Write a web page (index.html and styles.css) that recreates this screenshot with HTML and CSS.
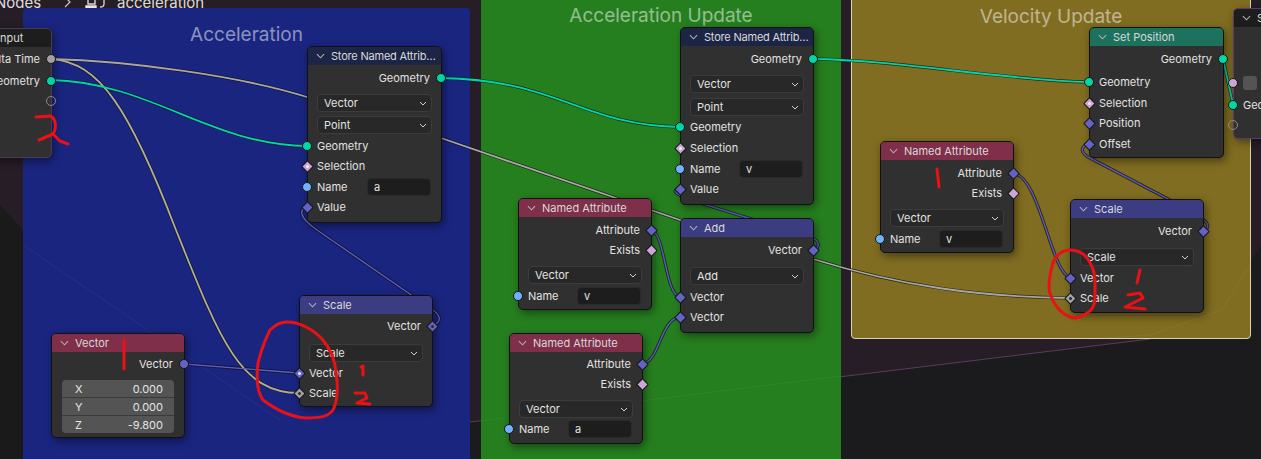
FILE: index.html
```html
<!DOCTYPE html>
<html lang="en">
<head>
<meta charset="utf-8">
<title>Geometry Nodes - acceleration</title>
<link rel="stylesheet" href="styles.css">
</head>
<body>
<main class="canvas">
  <svg class="layer" width="1261" height="459" viewBox="0 0 1261 459">
    <polygon class="bg-region" points="0,0 1261,0 1261,245 1222,310 1180,335 1150,339 470,422 0,478"/>
    <polygon class="bg-dark" points="0,205 23,230 23,459 0,459"/>
    <path class="bg-line" d="M470 422 L1150 339"/>
  </svg>

  <nav class="crumbs">
    <span class="crumb-nodes">Nodes</span>
    <svg class="crumb-sep" width="8" height="12" viewBox="0 0 8 12"><path d="M1 1 L6 6 L1 11"/></svg>
    <svg class="crumb-icon" width="21" height="13" viewBox="0 0 21 13"><path class="ic-a" d="M1 8 H11 V12 H1 Z"/><path class="ic-c" d="M3 1 H10 V6 H3 Z"/><path class="ic-b" d="M15 0 H19 V6 Q19 9 15 9"/></svg>
    <span class="crumb-name">acceleration</span>
  </nav>

  <section class="frame frame-blue"><h2 class="frame-title">Acceleration</h2></section>
  <section class="frame frame-green"><h2 class="frame-title title-high">Acceleration Update</h2></section>
  <section class="frame frame-yellow"><h2 class="frame-title title-high">Velocity Update</h2></section>

  <svg class="layer" width="1261" height="459" viewBox="0 0 1261 459">
    <path class="bg-faint" d="M23 245 L280 420 M481 421 L841 376 M1090 339 L1150 335 L1222 310 L1250 265"/>
    <g class="casing">
      <path d="M51 59 C130 61 240 76 307 97 L441 138 L680 220 L813 259 C900 286 980 297 1070 298"/>
      <path d="M51 59 C100 62 130 110 176 230 C220 340 240 393 299 393"/>
      <path d="M51 80 C150 82 210 145 307 146"/>
      <path d="M441 78 C560 80 580 125 680 127"/>
      <path d="M813 59 C900 60 1000 80 1089 82"/>
      <path d="M1223 59 L1233 104"/>
      <path d="M184 364 L299 373"/>
      <path d="M432 326 C442 322 441 316 433 310 L317 230 C300 218 298 210 307 207"/>
      <path d="M813 250 C822 247 818 240 812 238 L745 217 L700 203 C675 195 670 190 680 189"/>
      <path d="M651 230 C665 232 665 295 680 297"/>
      <path d="M642 364 C660 362 660 319 680 317"/>
      <path d="M1089 144 C1078 147 1082 154 1090 158 L1168 199 L1198 216 C1210 223 1210 228 1203 231"/>
      <path d="M1013 173 C1040 176 1050 270 1070 278"/>
    </g>
    <g class="wire">
      <path class="w-grey" d="M51 59 C130 61 240 76 307 97 L441 138 L680 220 L813 259 C900 286 980 297 1070 298"/>
      <path class="w-tan" d="M51 59 C100 62 130 110 176 230 C220 340 240 393 299 393"/>
      <path class="w-green" d="M51 80 C150 82 210 145 307 146"/>
      <path class="w-green" d="M441 78 C560 80 580 125 680 127"/>
      <path class="w-green" d="M813 59 C900 60 1000 80 1089 82"/>
      <path class="w-green" d="M1223 59 L1233 104"/>
      <path class="w-violet" d="M184 364 L299 373"/>
      <path class="w-violet" d="M432 326 C442 322 441 316 433 310 L317 230 C300 218 298 210 307 207"/>
      <path class="w-violet" d="M813 250 C822 247 818 240 812 238 L745 217 L700 203 C675 195 670 190 680 189"/>
      <path class="w-violet" d="M651 230 C665 232 665 295 680 297"/>
      <path class="w-violet" d="M642 364 C660 362 660 319 680 317"/>
      <path class="w-violet" d="M1089 144 C1078 147 1082 154 1090 158 L1168 199 L1198 216 C1210 223 1210 228 1203 231"/>
      <path class="w-violet" d="M1013 173 C1040 176 1050 270 1070 278"/>
    </g>
  </svg>

  <article class="node n-input">
    <header class="head head-black"><svg class="chev" viewBox="0 0 10 6"><path d="M1 1 L5 5 L9 1"/></svg><span class="head-text">Group Input</span></header>
    <div class="rows tight">
      <div class="row out">Delta Time<i class="sock circle grey"></i></div>
      <div class="row out gap2">Geometry<i class="sock circle teal"></i></div>
      <div class="row out"><i class="sock circle hollow"></i></div>
    </div>
  </article>

  <article class="node n-store1">
    <header class="head head-navy"><svg class="chev" viewBox="0 0 10 6"><path d="M1 1 L5 5 L9 1"/></svg><span class="head-text">Store Named Attrib…</span></header>
    <div class="rows">
      <div class="row out">Geometry<i class="sock circle teal"></i></div>
      <div class="select gap6">Vector<svg class="caret" viewBox="0 0 8 5"><path d="M1 1 L4 4 L7 1"/></svg></div>
      <div class="select gap4">Point<svg class="caret" viewBox="0 0 8 5"><path d="M1 1 L4 4 L7 1"/></svg></div>
      <div class="row gap2"><i class="sock circle teal"></i>Geometry</div>
      <div class="row"><i class="sock diamond pink dot"></i>Selection</div>
      <div class="row gap1"><i class="sock circle blue"></i>Name<span class="field">a</span></div>
      <div class="row"><i class="sock diamond violet"></i>Value</div>
    </div>
  </article>

  <article class="node n-scale1">
    <header class="head head-indigo"><svg class="chev" viewBox="0 0 10 6"><path d="M1 1 L5 5 L9 1"/></svg><span class="head-text">Scale</span></header>
    <div class="rows tight">
      <div class="row out">Vector<i class="sock diamond violet dot-dark"></i></div>
      <div class="select gap8">Scale<svg class="caret" viewBox="0 0 8 5"><path d="M1 1 L4 4 L7 1"/></svg></div>
      <div class="row gap1"><i class="sock diamond violet dot"></i>Vector</div>
      <div class="row"><i class="sock diamond grey dot-dark"></i>Scale</div>
    </div>
  </article>

  <article class="node n-vector">
    <header class="head head-red"><svg class="chev" viewBox="0 0 10 6"><path d="M1 1 L5 5 L9 1"/></svg><span class="head-text">Vector</span></header>
    <div class="rows tight">
      <div class="row out">Vector<i class="sock circle violet"></i></div>
      <div class="numbers">
        <div class="num"><span>X</span><span>0.000</span></div>
        <div class="num"><span>Y</span><span>0.000</span></div>
        <div class="num"><span>Z</span><span>-9.800</span></div>
      </div>
    </div>
  </article>

  <article class="node n-store2">
    <header class="head head-navy"><svg class="chev" viewBox="0 0 10 6"><path d="M1 1 L5 5 L9 1"/></svg><span class="head-text">Store Named Attrib…</span></header>
    <div class="rows">
      <div class="row out">Geometry<i class="sock circle teal"></i></div>
      <div class="select gap6">Vector<svg class="caret" viewBox="0 0 8 5"><path d="M1 1 L4 4 L7 1"/></svg></div>
      <div class="select gap5">Point<svg class="caret" viewBox="0 0 8 5"><path d="M1 1 L4 4 L7 1"/></svg></div>
      <div class="row gap1"><i class="sock circle teal"></i>Geometry</div>
      <div class="row gap1"><i class="sock diamond pink dot"></i>Selection</div>
      <div class="row gap1"><i class="sock circle blue"></i>Name<span class="field">v</span></div>
      <div class="row"><i class="sock diamond violet"></i>Value</div>
    </div>
  </article>

  <article class="node n-attr1">
    <header class="head head-red"><svg class="chev" viewBox="0 0 10 6"><path d="M1 1 L5 5 L9 1"/></svg><span class="head-text">Named Attribute</span></header>
    <div class="rows">
      <div class="row out">Attribute<i class="sock diamond violet"></i></div>
      <div class="row out">Exists<i class="sock diamond pink"></i></div>
      <div class="select gap6">Vector<svg class="caret" viewBox="0 0 8 5"><path d="M1 1 L4 4 L7 1"/></svg></div>
      <div class="row gap2"><i class="sock circle blue"></i>Name<span class="field">v</span></div>
    </div>
  </article>

  <article class="node n-add">
    <header class="head head-indigo"><svg class="chev" viewBox="0 0 10 6"><path d="M1 1 L5 5 L9 1"/></svg><span class="head-text">Add</span></header>
    <div class="rows">
      <div class="row out">Vector<i class="sock diamond violet"></i></div>
      <div class="select gap7">Add<svg class="caret" viewBox="0 0 8 5"><path d="M1 1 L4 4 L7 1"/></svg></div>
      <div class="row gap2"><i class="sock diamond violet"></i>Vector</div>
      <div class="row"><i class="sock diamond violet"></i>Vector</div>
    </div>
  </article>

  <article class="node n-attr2">
    <header class="head head-red"><svg class="chev" viewBox="0 0 10 6"><path d="M1 1 L5 5 L9 1"/></svg><span class="head-text">Named Attribute</span></header>
    <div class="rows tight">
      <div class="row out">Attribute<i class="sock diamond violet"></i></div>
      <div class="row out">Exists<i class="sock diamond pink"></i></div>
      <div class="select gap6">Vector<svg class="caret" viewBox="0 0 8 5"><path d="M1 1 L4 4 L7 1"/></svg></div>
      <div class="row gap1"><i class="sock circle blue"></i>Name<span class="field">a</span></div>
    </div>
  </article>

  <article class="node n-setpos">
    <header class="head head-teal"><svg class="chev" viewBox="0 0 10 6"><path d="M1 1 L5 5 L9 1"/></svg><span class="head-text">Set Position</span></header>
    <div class="rows">
      <div class="row out">Geometry<i class="sock circle teal"></i></div>
      <div class="row gap3"><i class="sock circle teal"></i>Geometry</div>
      <div class="row gap1"><i class="sock diamond pink dot"></i>Selection</div>
      <div class="row"><i class="sock diamond violet"></i>Position</div>
      <div class="row gap1"><i class="sock diamond violet"></i>Offset</div>
    </div>
  </article>

  <article class="node n-attr3">
    <header class="head head-red"><svg class="chev" viewBox="0 0 10 6"><path d="M1 1 L5 5 L9 1"/></svg><span class="head-text">Named Attribute</span></header>
    <div class="rows">
      <div class="row out">Attribute<i class="sock diamond violet"></i></div>
      <div class="row out">Exists<i class="sock diamond pink"></i></div>
      <div class="select gap6">Vector<svg class="caret" viewBox="0 0 8 5"><path d="M1 1 L4 4 L7 1"/></svg></div>
      <div class="row gap2"><i class="sock circle blue"></i>Name<span class="field">v</span></div>
    </div>
  </article>

  <article class="node n-scale3">
    <header class="head head-indigo"><svg class="chev" viewBox="0 0 10 6"><path d="M1 1 L5 5 L9 1"/></svg><span class="head-text">Scale</span></header>
    <div class="rows">
      <div class="row out">Vector<i class="sock diamond violet"></i></div>
      <div class="select gap7">Scale<svg class="caret" viewBox="0 0 8 5"><path d="M1 1 L4 4 L7 1"/></svg></div>
      <div class="row gap2"><i class="sock diamond violet"></i>Vector</div>
      <div class="row"><i class="sock diamond grey dot-dark"></i>Scale</div>
    </div>
  </article>

  <article class="node n-output">
    <header class="head head-black"><svg class="chev" viewBox="0 0 10 6"><path d="M1 1 L5 5 L9 1"/></svg><span class="head-text">Set Material</span></header>
    <div class="rows">
      <div class="row gap-out"><i class="sock circle pink"></i><span class="check"></span>Selection</div>
      <div class="row gap2"><i class="sock circle teal"></i>Geometry</div>
      <div class="row"><i class="sock circle hollow"></i></div>
    </div>
  </article>

  <svg class="layer ink" width="1261" height="459" viewBox="0 0 1261 459">
    <path d="M36 117 L50 116 C56 118 57 128 53 134 L39 140 M53 134 L60 141 L68 144"/>
    <path d="M124 340 L124 369"/>
    <path d="M270 330 C275 325 280 322 287 322 C300 322 314 330 323 340 C331 350 335 360 336 372 C338 385 338 400 333 410 C328 417 320 418 306 418 C290 417 275 409 263 400 C257 392 256 380 258 363 C261 350 265 340 270 330"/>
    <path d="M361 367 L363 366 L363 375"/>
    <path d="M355 393 L365 393 L367 398 L357 403 L370 404"/>
    <path d="M937 169 L939 187"/>
    <path d="M1053 263 C1055 256 1062 250 1070 250 C1078 250 1084 254 1087 258 C1092 265 1095 272 1095 280 L1095 300 C1094 307 1091 311 1087 313 C1082 317 1078 318 1073 318 C1066 316 1061 312 1057 307 C1052 300 1049 294 1049 287 C1049 278 1051 270 1053 263"/>
    <path d="M1140 270 L1137 283"/>
    <path d="M1128 295 L1140 293 L1143 298 L1125 307 L1145 309"/>
  </svg>
</main>
</body>
</html>
```
FILE: styles.css
```css
* { box-sizing: border-box; }
html, body { margin: 0; padding: 0; background: #1b1b1d; }
body { width: 1261px; height: 459px; overflow: hidden; font-family: Inter, "Noto Sans", sans-serif; }
.canvas { position: relative; width: 1261px; height: 459px; overflow: hidden; background: #1b1b1d; }
.layer { position: absolute; left: 0; top: 0; pointer-events: none; }
.bg-region { fill: #261d27; }
.bg-dark { fill: #1a1a1a; }
.bg-line { stroke: #5a3c5e; stroke-width: 1; fill: none; }
.bg-faint { stroke: rgba(255, 255, 255, .05); stroke-width: 1; fill: none; }

.crumbs { position: absolute; left: 0; top: -7px; height: 18px; display: flex; align-items: center; color: #dcdcdc; font-size: 15px; white-space: nowrap; }
.crumb-nodes { margin-left: -5px; width: 69px; }
.crumb-sep { fill: none; stroke: #c8c8c8; stroke-width: 1.2; }
.crumb-icon { margin-left: 13px; margin-top: 5px; fill: none; stroke-width: 1.4; }
.crumb-icon .ic-a { fill: #e6e6e6; stroke: #e6e6e6; }
.crumb-icon .ic-b { stroke: #d0d0d0; }
.crumb-icon .ic-c { stroke: #d8d8d8; }
.crumb-name { margin-left: 11px; }

.frame { position: absolute; border-radius: 4px; }
.frame-blue { left: 23px; top: 8px; width: 447px; height: 470px; background: #1a2580; }
.frame-green { left: 481px; top: -22px; width: 360px; height: 500px; background: #267f1f; }
.frame-yellow { left: 851px; top: -22px; width: 400px; height: 361px; background: #806d21; border: 1px solid #d9d4b8; }
.frame-title { margin: 0; padding-top: 16px; text-align: center; font-size: 19px; font-weight: 400; line-height: 22px; color: rgba(255, 255, 255, .5); }
.title-high { padding-top: 27px; }

.wire, .casing { fill: none; stroke-linecap: round; }
.casing path { stroke: rgba(15, 15, 25, .75); stroke-width: 3.2; }
.wire path { stroke-width: 1.8; }
.wire .w-violet { stroke-width: 1.4; }
.w-grey { stroke: #aaa7a2; }
.w-tan { stroke: #b0ad90; }
.w-green { stroke: #00d6a3; }
.w-violet { stroke: #5e5ebc; }

.node { position: absolute; background: #303030; border: 1px solid #111; border-radius: 5px; box-shadow: 2px 3px 8px rgba(0, 0, 0, .45); color: #e2e2e2; font-size: 11px; }
.head { height: 18px; display: flex; align-items: center; border-radius: 4px 4px 0 0; padding-left: 8px; color: #d8d8d8; white-space: nowrap; overflow: hidden; }
.head-text { margin-left: 6px; }
.chev { width: 9px; height: 6px; fill: none; stroke: #aeb0b8; stroke-width: 1.2; flex: none; }
.head-navy { background: #1d2546; }
.head-navy .head-text { letter-spacing: -.2px; }
.head-indigo { background: #3c3c83; }
.head-red { background: #7f2f4a; }
.head-teal { background: #1d725e; }
.head-black { background: #1d1d1d; }

.rows { padding: 3px 0 0; }
.rows.tight { padding-top: 2px; }
.row { position: relative; height: 20px; line-height: 20px; padding: 0 11px 0 9px; display: flex; align-items: center; justify-content: flex-start; white-space: nowrap; }
.row.out { justify-content: flex-end; }
.gap1 { margin-top: 1px; }
.gap2 { margin-top: 2px; }
.gap3 { margin-top: 3px; }
.gap4 { margin-top: 4px; }
.gap5 { margin-top: 5px; }
.gap6 { margin-top: 6px; }
.gap7 { margin-top: 7px; }
.gap8 { margin-top: 8px; }
.gap-out { margin-top: 43px; }

.select { position: relative; height: 18px; margin-left: 9px; margin-right: 9px; padding-left: 6px; background: #282828; border: 1px solid #3c3c3c; border-radius: 4px; line-height: 16px; }
.caret { position: absolute; right: 4px; top: 6px; width: 8px; height: 5px; fill: none; stroke: #d0d0d0; stroke-width: 1; }
.field { margin-left: auto; margin-right: -1px; width: 64px; height: 18px; padding-left: 6px; background: #1d1d1d; border: 1px solid #2a2a2a; border-radius: 4px; line-height: 16px; }

.numbers { margin: 6px 10px 0; border-radius: 4px; overflow: hidden; background: #3a3a3a; }
.num { height: 17px; padding: 0 11px 0 13px; display: flex; justify-content: space-between; align-items: center; background: #545454; margin-bottom: 1px; color: #e4e4e4; }
.num:last-child { margin-bottom: 0; }

.sock { position: absolute; top: 5px; left: -6px; width: 10px; height: 10px; border: 1px solid #161616; }
.out .sock { left: auto; right: -5px; }
.circle { border-radius: 50%; }
.diamond { width: 9px; height: 9px; top: 5.5px; left: -5.5px; transform: rotate(45deg); border-radius: 1px; }
.out .diamond { right: -4.5px; }
.teal { background: #00d6a3; }
.grey { background: #a1a1a1; }
.blue { background: #70b2ff; }
.pink { background: #cca6d6; }
.violet { background: #6363c7; }
.hollow { background: transparent; border: 1px solid #8a8a8a; }
.dot::after, .dot-dark::after { content: ""; position: absolute; left: 2px; top: 2px; width: 3px; height: 3px; border-radius: 50%; background: #f2eaf6; }
.dot-dark::after { background: #2a2a2a; }
.check { width: 14px; height: 14px; border-radius: 3px; background: #545454; margin-right: 5px; flex: none; }

.n-input { left: -62px; top: 28px; width: 114px; height: 130px; border-color: #4b3a50; }
.n-store1 { left: 307px; top: 46px; width: 135px; height: 177px; }
.n-scale1 { left: 299px; top: 295px; width: 134px; height: 112px; }
.n-vector { left: 51px; top: 333px; width: 134px; height: 105px; }
.n-store2 { left: 680px; top: 27px; width: 134px; height: 178px; }
.n-attr1 { left: 518px; top: 198px; width: 134px; height: 112px; }
.n-add { left: 680px; top: 218px; width: 134px; height: 115px; }
.n-attr2 { left: 509px; top: 333px; width: 134px; height: 111px; }
.n-setpos { left: 1089px; top: 27px; width: 135px; height: 131px; }
.n-attr3 { left: 880px; top: 141px; width: 134px; height: 112px; }
.n-scale3 { left: 1070px; top: 199px; width: 134px; height: 114px; }
.n-output { left: 1233px; top: 8px; width: 140px; height: 131px; border-color: #5a3a6a; }

.ink { fill: none; stroke: #ea1116; stroke-width: 3; stroke-linecap: round; stroke-linejoin: round; }
```
